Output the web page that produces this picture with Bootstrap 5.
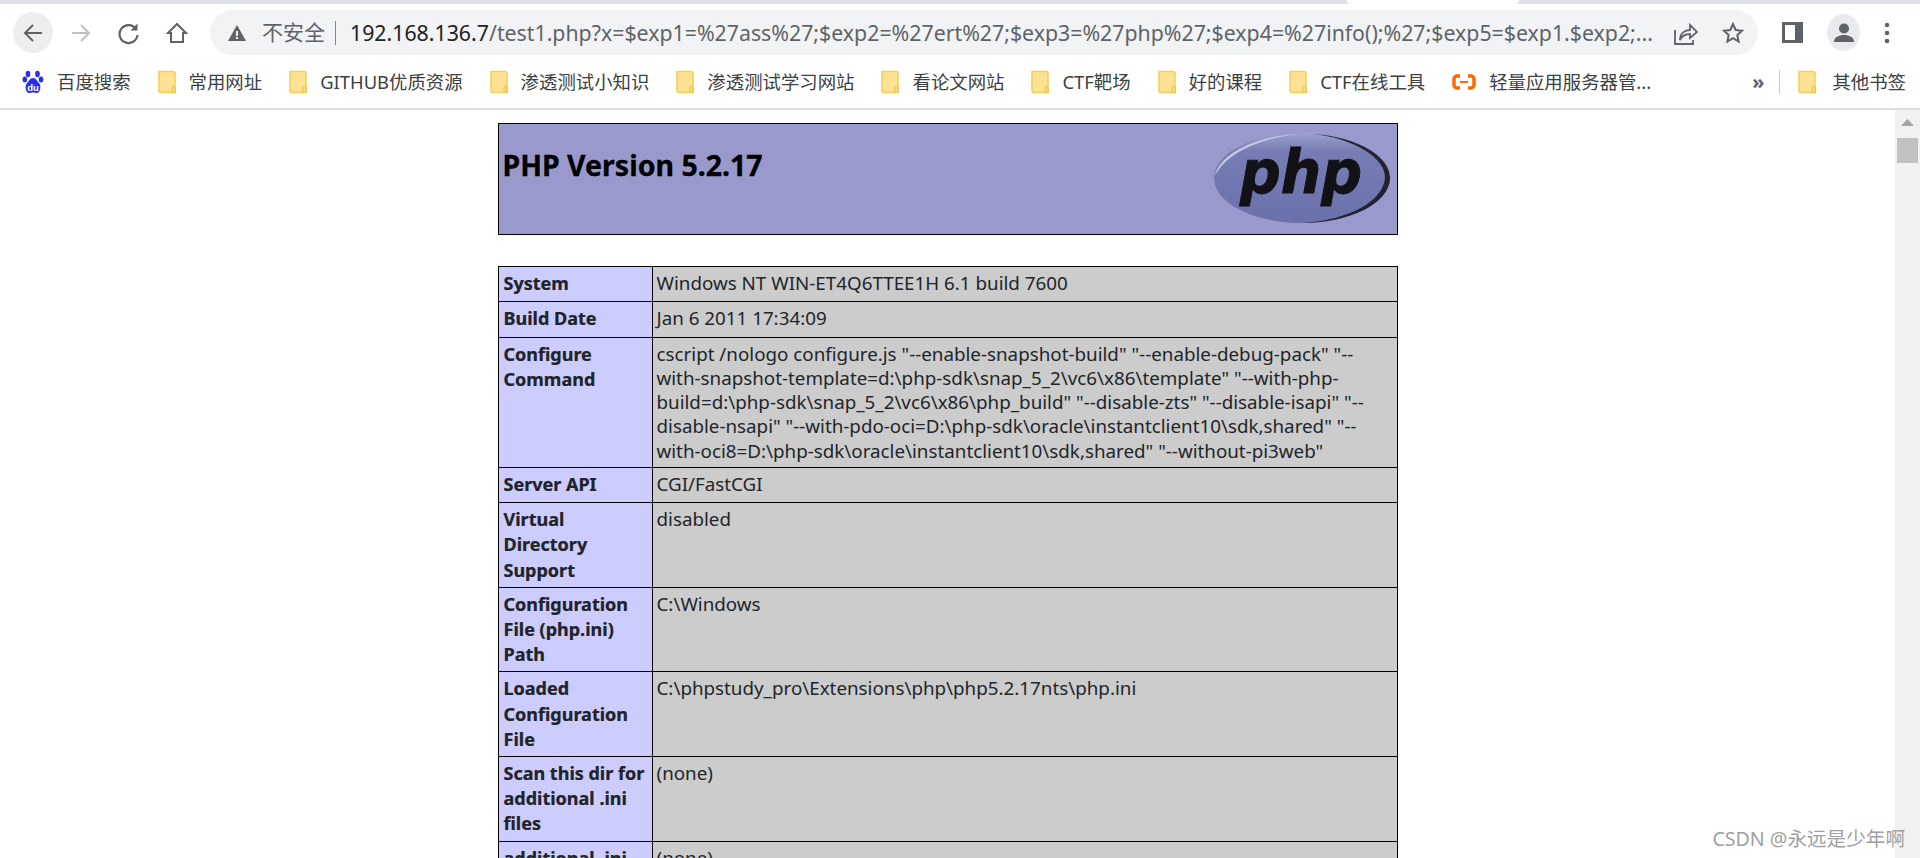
<!DOCTYPE html>
<html lang="en">
<head>
  <meta charset="UTF-8" />
  <meta name="viewport" content="width=device-width, initial-scale=1.0"/>
  <title>phpinfo()</title>
  <link href="https://cdn.jsdelivr.net/npm/bootstrap@5.3.0/dist/css/bootstrap.min.css" rel="stylesheet"/>
  <style>
    html, body { height: 858px; overflow: hidden; background: #fff; }
    body { font-family: "Noto Sans", "Noto Sans CJK SC", sans-serif; color: #000; }

    /* browser chrome */
    .tab-strip { height: 4px; background: #dee1e6; }
    .tab-white { width: 172px; margin-left: 1347px; height: 4px; background: #fff; border-radius: 0 0 6px 6px; }
    .tool-row { height: 56px; padding: 6px 0 5px 13px; }
    .round-btn { width: 40px; height: 41px; border-radius: 50%; }
    .back-on { background: #eeeeee; }
    .avatar-btn { width: 33px; height: 37px; background: #e8eaed; }
    .omni { width: 1548px; height: 45px; margin-left: 13px; border-radius: 23px; background: #f1f3f4; padding: 0 14px 0 18px; }
    .omni-warn { width: 18px; }
    .omni-label { font-size: 21px; color: #5f6368; margin-left: 16px; white-space: nowrap; width: 62px; }
    .omni-sep { width: 1px; height: 24px; background: #80868b; margin: 0 14px 0 11px; }
    .omni-url { font-size: 21.3px; color: #5f6368; white-space: nowrap; width: 1303px; overflow: hidden; }
    .omni-url b { font-weight: 400; color: #202124; }
    .bm-row { height: 50px; padding: 0 14px 4px 22px; border-bottom: 2px solid #dddddd; font-size: 18.4px; color: #3c4043; }
    .bm-item { white-space: nowrap; margin-right: 27px; }
    .bm-item svg { margin-right: 13px; flex: none; }
    .bm-more { color: #5f6368; font-weight: 700; font-size: 20px; margin-right: 15px; }
    .bm-split { width: 1px; height: 24px; background: #c8c8c8; margin-right: 18px; }

    /* page */
    .page-area { height: 748px; overflow: hidden; }
    .page-main { padding-top: 13px; min-width: 0; }
    .php-wrap { width: 900px; }
    .php-head { height: 112px; background: #9999cc; border: 1px solid #000; padding: 0 6px 0 4px; margin-bottom: 31px; }
    .php-title { font-family: "Noto Sans", sans-serif; font-size: 28.5px; font-weight: 700; line-height: 1; margin: 27px 0 0 0; -webkit-text-stroke: .3px #000; }
    .table.php-tbl { width: 900px; margin: 0; border-collapse: collapse; table-layout: fixed; --bs-table-border-color: #000; }
    .table.php-tbl > tbody > tr > td { height: 35.4px; padding: 4px 3px 4px 4px; border: 1px solid #000; vertical-align: top; }
    .table.php-tbl > tbody > tr > td.php-key { --bs-table-bg: #ccccff; font-size: 18px; line-height: 25.2px; font-weight: 700; width: 154px; padding-left: 5px; -webkit-text-stroke: .2px #000; }
    .table.php-tbl > tbody > tr > td.php-val { --bs-table-bg: #cccccc; font-size: 18.8px; line-height: 24.2px; }

    .sbar { width: 25px; flex: none; background: #f1f1f1; padding: 9px 2px 0; }
    .sbar-thumb { height: 25px; background: #c1c1c1; margin-top: 12px; }
    .water-mark { position: absolute; right: 15px; bottom: 8px; font-size: 19.6px; color: #a0a0a0; line-height: 1.1; }
  </style>
</head>
<body class="position-relative">

  <svg width="0" height="0" class="position-absolute">
    <defs>
      <symbol id="fold" viewBox="0 0 18 24">
        <path d="M1 1.500h14a2 2 0 0 1 2 2v19H3a2 2 0 0 1-2-2z" fill="#fde293" stroke="#f5cf5c" stroke-width="1.600"/>
        <path d="M14 23v-5a1.400 1.400 0 0 1 3 0v5" fill="none" stroke="#eec04b" stroke-width="1.200"/>
      </symbol>
    </defs>
  </svg>

  <div class="tab-strip"><div class="tab-white"></div></div>

  <div class="tool-row d-flex align-items-center">
    <div class="round-btn back-on d-flex align-items-center justify-content-center">
      <svg width="22" height="22" viewBox="0 0 22 22" fill="none" stroke="#5f6368" stroke-width="2"><path d="M20 11H3M11 3l-8 8 8 8"/></svg>
    </div>
    <div class="round-btn ms-2 d-flex align-items-center justify-content-center">
      <svg width="22" height="22" viewBox="0 0 22 22" fill="none" stroke="#bdc1c6" stroke-width="2"><path d="M2 11h17M11 3l8 8-8 8"/></svg>
    </div>
    <div class="round-btn ms-2 d-flex align-items-center justify-content-center">
      <svg width="24" height="24" viewBox="0 0 24 24" fill="none" stroke="#5f6368" stroke-width="2.200"><path d="M19 8a9 9 0 1 0 1.500 6"/><path d="M20.500 2.500v7h-7" fill="#5f6368" stroke="none"/></svg>
    </div>
    <div class="round-btn ms-2 d-flex align-items-center justify-content-center">
      <svg width="24" height="24" viewBox="0 0 24 24" fill="none" stroke="#5f6368" stroke-width="2"><path d="M12 3 3 12h3v9h12v-9h3z"/></svg>
    </div>

    <div class="omni d-flex align-items-center">
      <svg class="omni-warn flex-none" width="18" height="16" viewBox="0 0 18 16"><path d="M9 0l9 16H0z" fill="#5f6368"/><path d="M8 6h2v5H8zM8 12h2v2H8z" fill="#f1f3f4"/></svg>
      <span class="omni-label">不安全</span>
      <span class="omni-sep"></span>
      <span class="omni-url"><b>192.168.136.7</b>/test1.php?x=$exp1=%27ass%27;$exp2=%27ert%27;$exp3=%27php%27;$exp4=%27info();%27;$exp5=$exp1.$exp2;...</span>
      <svg class="ms-auto" width="24" height="24" viewBox="0 0 24 24" fill="none" stroke="#5f6368" stroke-width="1.800"><path d="M1 9v14h18v-4"/><path d="M6 19c0-7 5-10 10-10V4l7 7-7 6v-4c-5 0-8 2-10 6z"/></svg>
      <svg class="ms-4" width="22" height="22" viewBox="0 0 22 22" fill="none" stroke="#5f6368" stroke-width="2"><path d="M11 2l2.700 6 6.300.7-4.700 4.300 1.300 6.500L11 16.200 5.400 19.500l1.300-6.500L2 8.700 8.300 8z"/></svg>
    </div>

    <svg class="ms-4" width="21" height="21" viewBox="0 0 21 21"><path d="M0 0h21v21H0z" fill="#5f6368"/><path d="M3 3h10v15H3z" fill="#fff"/></svg>
    <div class="round-btn avatar-btn d-flex align-items-center justify-content-center ms-4">
      <svg width="22" height="22" viewBox="0 0 22 22" fill="#5f6368"><circle cx="11" cy="6.500" r="5"/><path d="M1 20c0-5 5-7 10-7s10 2 10 7z"/></svg>
    </div>
    <svg class="ms-4" width="6" height="22" viewBox="0 0 6 22" fill="#5f6368"><circle cx="3" cy="3" r="2.300"/><circle cx="3" cy="11" r="2.300"/><circle cx="3" cy="19" r="2.300"/></svg>
  </div>

  <div class="bm-row d-flex align-items-center">
    <div class="bm-item d-flex align-items-center">
      <svg width="22" height="24" viewBox="0 0 22 24" fill="#2932e1"><ellipse cx="6" cy="4" rx="2.300" ry="3.200"/><ellipse cx="15.500" cy="4" rx="2.300" ry="3.200"/><ellipse cx="2.800" cy="9.500" rx="2.300" ry="3"/><ellipse cx="19" cy="9.500" rx="2.300" ry="3"/><path d="M11 8c3 0 4 3 6 5 2.500 2.500 1.500 10-2 10-1.500 0-2.500-.6-4-.6S8.500 23 7 23c-3.500 0-4.500-7.500-2-10 2-2 3-5 6-5z"/><text x="11" y="20.500" text-anchor="middle" font-family="Liberation Sans" font-weight="700" font-size="9.500" fill="#fff">du</text></svg>
      <span>百度搜索</span>
    </div>
    <div class="bm-item d-flex align-items-center"><svg width="18" height="24"><use href="#fold"/></svg><span>常用网址</span></div>
    <div class="bm-item d-flex align-items-center"><svg width="18" height="24"><use href="#fold"/></svg><span>GITHUB优质资源</span></div>
    <div class="bm-item d-flex align-items-center"><svg width="18" height="24"><use href="#fold"/></svg><span>渗透测试小知识</span></div>
    <div class="bm-item d-flex align-items-center"><svg width="18" height="24"><use href="#fold"/></svg><span>渗透测试学习网站</span></div>
    <div class="bm-item d-flex align-items-center"><svg width="18" height="24"><use href="#fold"/></svg><span>看论文网站</span></div>
    <div class="bm-item d-flex align-items-center"><svg width="18" height="24"><use href="#fold"/></svg><span>CTF靶场</span></div>
    <div class="bm-item d-flex align-items-center"><svg width="18" height="24"><use href="#fold"/></svg><span>好的课程</span></div>
    <div class="bm-item d-flex align-items-center"><svg width="18" height="24"><use href="#fold"/></svg><span>CTF在线工具</span></div>
    <div class="bm-item d-flex align-items-center">
      <svg width="24" height="16" viewBox="0 0 24 16" fill="none" stroke="#ff6a00" stroke-width="3.500"><path d="M8 2H5a3 3 0 0 0-3 3v6a3 3 0 0 0 3 3h3M16 2h3a3 3 0 0 1 3 3v6a3 3 0 0 1-3 3h-3"/><path d="M8 8h8" stroke-width="2"/></svg>
      <span>轻量应用服务器管...</span>
    </div>
    <span class="bm-more ms-auto">»</span>
    <span class="bm-split"></span>
    <div class="d-flex align-items-center text-nowrap"><svg class="me-3" width="18" height="24"><use href="#fold"/></svg><span>其他书签</span></div>
  </div>

  <div class="page-area d-flex">
    <div class="page-main flex-grow-1 d-flex justify-content-center">
      <div class="php-wrap">
        <div class="php-head d-flex justify-content-between align-items-start">
          <h1 class="php-title">PHP Version 5.2.17</h1>
          <svg class="mt-2" width="178" height="92" viewBox="0 0 178 92">
            <defs>
              <linearGradient id="php-oval" x1="0" y1="0" x2="0" y2="1">
                <stop offset="0" stop-color="#9ba0cc"/><stop offset=".2" stop-color="#777db4"/><stop offset="1" stop-color="#6a70ab"/>
              </linearGradient>
            </defs>
            <ellipse cx="89" cy="46" rx="88" ry="45" fill="url(#php-oval)"/>
            <path d="M2 44C6 22 44 3 88 2c-40 3-76 20-86 42z" fill="#c4c8e4"/>
            <path d="M100 2c44 3 77 22 77 44 0 25-40 45-88 45 48-3 81-22 83-45 1-20-32-40-72-44z" fill="#23232e"/>
            <text x="88" y="61" text-anchor="middle" font-family="DejaVu Sans" font-weight="700" font-style="italic" font-size="60" textLength="122" lengthAdjust="spacingAndGlyphs" fill="#111116" stroke="#111116" stroke-width="1">php</text>
          </svg>
        </div>

        <table class="table php-tbl">
          <tbody>
            <tr><td class="php-key">System</td><td class="php-val">Windows NT WIN-ET4Q6TTEE1H 6.1 build 7600</td></tr>
            <tr><td class="php-key">Build Date</td><td class="php-val">Jan 6 2011 17:34:09</td></tr>
            <tr><td class="php-key">Configure Command</td><td class="php-val">cscript /nologo configure.js "--enable-snapshot-build" "--enable-debug-pack" "--with-snapshot-template=d:\php-sdk\snap_5_2\vc6\x86\template" "--with-php-build=d:\php-sdk\snap_5_2\vc6\x86\php_build" "--disable-zts" "--disable-isapi" "--disable-nsapi" "--with-pdo-oci=D:\php-sdk\oracle\instantclient10\sdk,shared" "--with-oci8=D:\php-sdk\oracle\instantclient10\sdk,shared" "--without-pi3web"</td></tr>
            <tr><td class="php-key">Server API</td><td class="php-val">CGI/FastCGI</td></tr>
            <tr><td class="php-key">Virtual Directory Support</td><td class="php-val">disabled</td></tr>
            <tr><td class="php-key">Configuration File (php.ini) Path</td><td class="php-val">C:\Windows</td></tr>
            <tr><td class="php-key">Loaded Configuration File</td><td class="php-val">C:\phpstudy_pro\Extensions\php\php5.2.17nts\php.ini</td></tr>
            <tr><td class="php-key">Scan this dir for additional .ini files</td><td class="php-val">(none)</td></tr>
            <tr><td class="php-key">additional .ini files parsed</td><td class="php-val">(none)</td></tr>
          </tbody>
        </table>
      </div>
    </div>
    <div class="sbar">
      <svg class="d-block mx-auto" width="13" height="7" viewBox="0 0 13 7"><path d="M6.500 0l6.500 7H0z" fill="#a3a3a3"/></svg>
      <div class="sbar-thumb"></div>
    </div>
  </div>

  <div class="water-mark">CSDN @永远是少年啊</div>

  <script src="https://cdn.jsdelivr.net/npm/bootstrap@5.3.0/dist/js/bootstrap.bundle.min.js"></script>
</body>
</html>
